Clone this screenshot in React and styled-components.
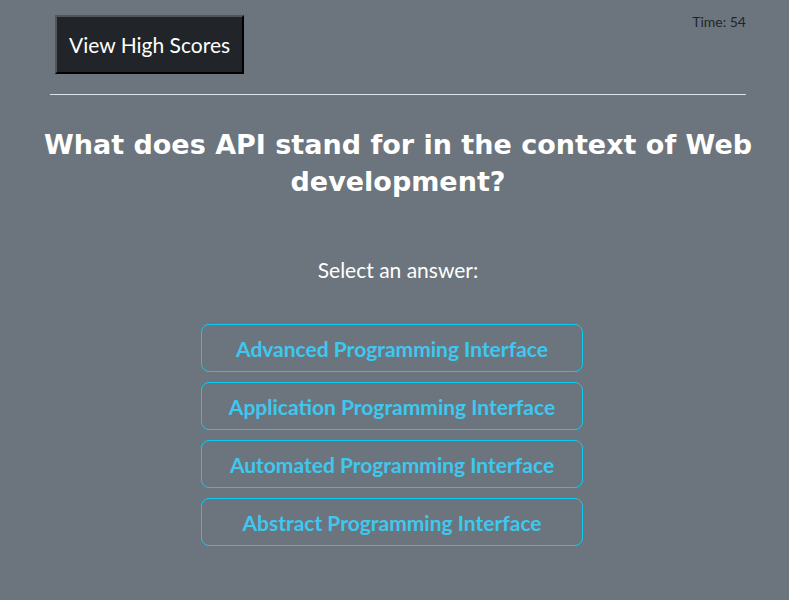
import React from "react";
import styled, { createGlobalStyle } from "styled-components";

const GlobalStyle = createGlobalStyle`
  html, body {
    margin: 0;
    padding: 0;
    background: #6c757d;
  }
  body {
    font-family: Lato, "Noto Sans", sans-serif;
  }
`;

const Page = styled.div`
  min-height: 600px;
  background: #6c757d;
  padding: 15px 43px 0 50px;
  box-sizing: border-box;
`;

const Header = styled.header`
  display: flex;
  justify-content: space-between;
  align-items: flex-start;
  padding: 0 0 20px 5px;
  border-bottom: 1px solid #dee2e6;
`;

const ScoresButton = styled.button`
  font-family: Lato, sans-serif;
  font-size: 21px;
  color: #fff;
  background: #212529;
  height: 59px;
  padding: 0 12px;
  border: 2px solid;
  border-color: #555 #000 #000 #555;
  cursor: pointer;
`;

const Timer = styled.div`
  font-size: 14px;
  color: #212529;
  margin-top: -2px;
`;

const Question = styled.h1`
  margin: 31px -10px 0;
  text-align: center;
  color: #fff;
  font-family: "DejaVu Sans", sans-serif;
  font-weight: 700;
  font-size: 27px;
  line-height: 37px;
`;

const Prompt = styled.p`
  margin: 57px 0 0;
  text-align: center;
  color: #fff;
  font-size: 21px;
`;

const Answers = styled.div`
  display: flex;
  flex-direction: column;
  align-items: center;
  gap: 10px;
  margin: 42px 12px 0 0;
`;

const Answer = styled.button`
  width: 382px;
  height: 48px;
  background: transparent;
  border: 1px solid #0dcaf0;
  border-radius: 8px;
  color: #3ec8f0;
  font-family: Lato, sans-serif;
  font-weight: 700;
  font-size: 21px;
  cursor: pointer;
`;

const answers = [
  "Advanced Programming Interface",
  "Application Programming Interface",
  "Automated Programming Interface",
  "Abstract Programming Interface",
];

export default function App() {
  return (
    <>
      <GlobalStyle />
      <Page>
        <Header>
          <ScoresButton>View High Scores</ScoresButton>
          <Timer>Time: 54</Timer>
        </Header>
        <Question>What does API stand for in the context of Web development?</Question>
        <Prompt>Select an answer:</Prompt>
        <Answers>
          {answers.map((a) => (
            <Answer key={a}>{a}</Answer>
          ))}
        </Answers>
      </Page>
    </>
  );
}
